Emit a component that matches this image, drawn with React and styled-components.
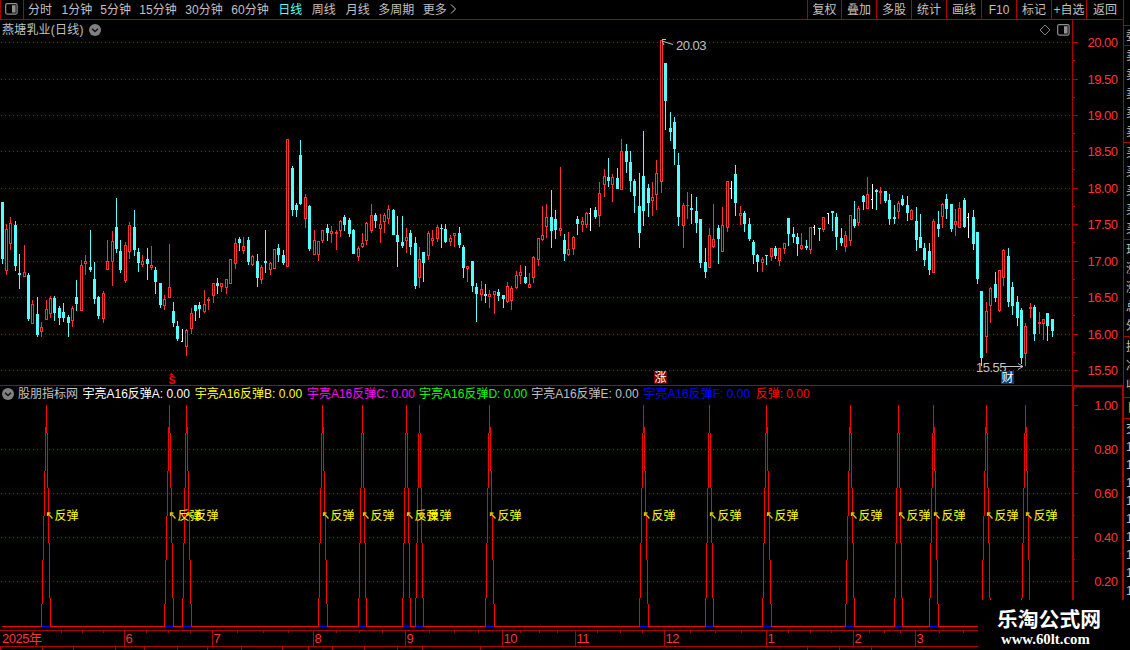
import React, { memo } from "react";
import styled, { createGlobalStyle } from "styled-components";

const LINE = "#b00000";
const RED = "#ff3232";
const CYAN = "#54ffff";

const GlobalStyle = createGlobalStyle`
  * {
    box-sizing: border-box;
  }
  body {
    margin: 0;
    background: #000;
    font-family: "Liberation Sans", "Noto Sans CJK SC", sans-serif;
    font-size: 12px;
    color: #c0c0c0;
  }
  svg {
    display: block;
    flex: none;
  }
`;

const Screen = styled.div`
  position: relative;
  display: flex;
  width: 1130px;
  height: 650px;
  background: #000;
  overflow: hidden;
`;

const Main = styled.div`
  display: flex;
  flex-direction: column;
  width: 1124px;
  flex: none;
`;

const Toolbar = styled.div`
  display: flex;
  height: 20px;
  border-bottom: 1px solid ${LINE};
  border-right: 1px solid ${LINE};
  border-left: 1px solid ${LINE};
  line-height: 20px;
  white-space: nowrap;
`;

const LayoutButton = styled.div`
  width: 23px;
  border-right: 1px solid ${LINE};
  padding: 3px 0 0 4px;
`;

const Periods = styled.div`
  display: flex;
  flex: 1;
  padding-left: 4px;
`;

const Period = styled.span`
  width: ${(p) => p.$w}px;
  color: ${(p) => (p.$active ? CYAN : "#c0c0c0")};
`;

const Tool = styled.div`
  width: ${(p) => p.$w}px;
  border-left: 1px solid ${LINE};
  text-align: center;
`;

const Panel = styled.div`
  display: flex;
  height: ${(p) => p.$h}px;
`;

const Plot = styled.div`
  width: 1072px;
  border-top: ${(p) => (p.$line ? `1px solid ${LINE}` : "none")};
  svg.chart {
    overflow: visible;
  }
`;

const Axis = styled.div`
  width: 52px;
  border: ${(p) => p.$b}px solid ${LINE};
  ${(p) => p.$b === 1 && "border-top: none; border-bottom: none;"}
  svg {
    overflow: visible;
  }
`;

const TitleRow = styled.div`
  display: flex;
  align-items: center;
  height: 20px;
  padding: 0 2px 1px 2px;
  line-height: 18px;
  .name {
    width: 87px;
    letter-spacing: 0.2px;
  }
  .icons {
    display: flex;
    gap: 6px;
    margin-left: auto;
  }
`;

const LegendRow = styled.div`
  display: flex;
  align-items: center;
  height: 16px;
  margin-bottom: 2px;
  padding-left: 2px;
  line-height: 16px;
  white-space: nowrap;
  .source {
    flex: none;
    width: 68.5px;
    padding-left: 4px;
  }
`;

const Legend = styled.span`
  flex: none;
  width: 112.2px;
  color: ${(p) => p.$color};
`;

const AxisText = styled.text`
  font-size: 13px;
  letter-spacing: -0.5px;
  fill: ${(p) => p.$color || RED};
`;

const TimeAxis = styled.div`
  height: 20px;
`;

const Sidebar = styled.div`
  width: 6px;
  overflow: hidden;
  padding-top: 25px;
`;

const SideGroup = styled.div`
  border-top: 1px solid ${LINE};
  height: ${(p) => p.$h}px;
  padding: 1px 0 0 ${(p) => p.$left || 2}px;
  line-height: ${(p) => p.$lh || 19}px;
  white-space: nowrap;
  color: ${(p) => p.$color || "#c0c0c0"};
  overflow: hidden;
`;

const Watermark = styled.div`
  position: absolute;
  left: 978px;
  top: 600px;
  width: 152px;
  height: 50px;
  background: #000;
  color: #fff;
  p {
    margin: 0;
    white-space: nowrap;
  }
  .site {
    font: bold 20.8px/24px "Noto Sans CJK SC", sans-serif;
    padding: 6px 0 0 19px;
  }
  .url {
    font: bold 14.8px/16px "Liberation Serif", serif;
    padding: 1px 0 0 23px;
  }
`;

const periods = [
  ["分时", 33.5],
  ["1分钟", 38.8],
  ["5分钟", 39],
  ["15分钟", 46],
  ["30分钟", 46],
  ["60分钟", 47],
  ["日线", 33.5],
  ["周线", 34],
  ["月线", 32.5],
  ["多周期", 44.5],
  ["更多", 27],
];

const tools = [
  ["复权", 34],
  ["叠加", 35],
  ["多股", 35],
  ["统计", 35],
  ["画线", 35],
  ["F10", 35],
  ["标记", 35],
  ["+自选", 35],
  ["返回", 37],
];

const legends = [
  ["宇亮A16反弹A: 0.00", "#ffffff"],
  ["宇亮A16反弹B: 0.00", "#ffff00"],
  ["宇亮A16反弹C: 0.00", "#ff00ff"],
  ["宇亮A16反弹D: 0.00", "#00ff00"],
  ["宇亮A16反弹E: 0.00", "#c0c0c0"],
  ["宇亮A16反弹F: 0.00", "#0000ff"],
  ["反弹: 0.00", "#ff0000"],
];

const quotes = [
  { h: 20, rows: ["委比"] },
  { h: 97, rows: ["卖五", "卖四", "卖三", "卖二", "卖一"] },
  { h: 97, rows: ["买一", "买二", "买三", "买四", "买五"] },
  { h: 97, rows: ["现价", "涨跌", "涨幅", "总量", "外盘"] },
  { h: 61, rows: ["换手", "净资", "收益"] },
  { h: 21, rows: ["日"], color: "#c8c800", left: 3 },
  {
    h: 182,
    lh: 18,
    rows: ["交", "14:50", "14:51", "14:52", "14:53", "14:54", "14:55", "14:56", "14:57", "14:58"],
  },
];

// kind x high bodyTop bodyBottom low; for "w": kind x high close low
const candles = `
c 2 202 202 259 264|r 6 224 229 271 275|r 10 217 223 244 250|c 15 221 225 266 271|c 19 254 273 275 289
r 24 245 272 277 277|c 28 273 275 319 321|r 32 300 304 324 324|c 37 297 314 335 337|r 41 322 327 332 337
r 46 300 309 320 320|r 50 296 298 314 318|c 54 296 298 313 321|c 59 306 308 318 325|c 63 303 312 318 322
c 68 315 317 323 337|r 72 306 308 321 327|c 76 280 297 304 311|r 81 260 265 311 311|r 85 255 261 264 275
c 90 230 267 270 272|c 94 262 279 299 304|c 98 296 297 316 319|r 103 291 293 319 323|r 107 240 261 270 270
r 112 231 241 262 286|c 116 198 227 249 253|c 120 240 251 270 273|r 125 242 245 281 283|r 129 222 225 252 259
c 134 210 227 250 256|c 138 248 252 263 272|r 142 255 261 265 267|c 147 248 259 264 280|r 151 246 265 268 270
c 155 267 270 282 294|c 160 283 283 305 308|r 164 295 299 306 310|r 169 244 287 298 298|c 173 302 311 323 327
c 177 321 326 339 341|w 182 329 341 342|r 186 329 330 347 356|r 191 308 313 329 334|c 195 305 305 311 321
c 199 302 305 309 318|r 204 290 304 312 313|r 208 297 299 301 310|r 213 283 283 296 303|c 217 278 283 286 294
r 221 283 283 287 292|r 226 279 279 288 294|r 230 259 259 284 284|r 235 238 243 264 269|c 239 237 239 243 251
r 243 237 246 251 254|c 248 237 240 262 265|r 252 255 256 265 266|c 257 254 261 278 287|r 261 265 267 280 284
c 265 230 261 263 273|r 270 262 263 270 275|r 274 249 249 269 269|c 278 244 248 255 262|c 283 250 255 263 265
r 287 139 139 267 267|c 292 166 168 210 216|c 296 203 205 210 217|c 300 140 155 204 205|r 305 194 197 219 228
c 309 205 206 249 251|r 314 230 240 255 255|r 318 241 241 255 261|r 322 230 230 241 243|c 327 224 228 233 241
r 331 226 231 234 243|r 336 230 232 234 250|r 340 220 221 231 237|c 344 215 217 225 231|c 349 218 220 234 237
c 353 229 230 254 254|r 358 246 248 257 261|r 362 233 243 247 248|r 366 222 223 241 245|r 371 204 215 231 233
c 375 213 215 221 228|r 380 214 224 229 243|r 384 213 215 222 233|r 388 205 209 219 224|c 393 209 210 235 235
c 397 216 235 242 267|c 402 216 242 246 248|r 406 228 237 241 253|c 410 230 233 247 255|c 415 237 243 286 289
r 419 247 259 278 288|c 423 252 252 263 282|r 428 231 233 256 260|r 432 230 238 241 246|r 437 225 227 239 242
c 441 224 228 229 248|c 445 224 229 242 243|r 450 235 238 242 246|r 454 233 233 236 247|c 459 227 233 245 248
c 463 245 247 268 278|r 467 266 266 269 282|c 472 261 261 286 292|c 476 283 287 294 322|r 481 281 289 295 301
c 485 284 294 296 303|r 489 290 294 297 308|r 494 291 291 295 314|c 498 289 292 296 301|c 503 295 295 299 308
r 507 282 286 302 303|r 511 286 288 301 310|r 516 271 275 288 289|r 520 265 272 276 284|c 525 266 277 283 284
r 529 273 284 288 288|r 533 256 257 278 283|r 538 238 238 260 266|r 542 206 235 240 241|r 546 204 217 227 238
c 551 190 217 231 248|c 555 210 219 230 239|r 560 167 228 231 236|c 564 234 240 254 261|r 568 232 249 255 256
r 573 236 237 249 255|c 577 216 219 224 235|r 582 217 221 225 232|r 586 212 213 225 228|w 590 208 213 231
c 595 207 210 217 219|r 599 182 193 216 227|r 604 169 176 185 197|c 608 158 177 181 187|r 612 174 177 185 202
c 617 168 178 189 189|r 621 139 151 190 190|c 626 144 151 162 173|c 630 151 162 181 192|c 634 179 181 196 213
c 639 173 206 233 248|c 643 131 176 211 226|c 648 184 188 203 217|r 652 182 197 201 216|r 656 160 173 195 210
r 661 40 40 182 193|c 665 63 63 101 130|c 670 112 128 132 141|c 674 117 122 149 165|c 678 153 165 217 226
r 683 203 205 226 248|r 687 192 205 206 219|c 691 194 208 210 224|c 696 197 211 223 233|c 700 219 219 263 268
c 705 248 262 272 278|r 709 228 235 268 268|r 713 204 239 247 248|c 718 225 228 239 264|r 722 207 225 252 252
r 727 181 181 228 232|w 731 181 188 199|c 735 165 174 203 216|r 740 206 213 216 225|c 744 211 213 224 232
c 749 218 224 239 241|c 753 240 242 255 264|c 757 254 255 262 272|r 762 257 259 263 272|c 766 255 255 256 265
r 771 248 248 257 261|c 775 246 248 256 259|r 779 248 248 261 266|r 784 243 243 249 254|c 788 218 218 234 246
c 793 227 234 237 243|c 797 233 237 244 256|r 801 233 245 249 250|c 806 240 246 248 250|r 810 227 227 250 254
w 814 225 227 235|c 819 228 228 229 241|r 823 217 217 230 232|w 828 213 213 224|c 832 211 211 213 231
c 836 213 217 237 250|c 841 228 238 243 246|r 845 231 235 247 252|r 850 215 215 241 246|c 854 201 219 226 228
r 858 206 208 223 226|c 863 195 196 202 210|r 867 177 194 209 209|w 872 184 199 209|c 876 189 190 192 210
r 880 187 191 193 204|c 885 191 191 201 203|c 889 194 200 219 225|c 894 205 217 219 224|r 898 201 203 212 219
c 902 195 199 205 206|c 907 196 205 213 221|r 911 209 210 220 220|c 916 207 221 240 251|c 920 214 237 248 248
c 924 243 248 260 266|c 929 243 251 270 275|r 933 219 221 273 273|c 938 211 224 229 237|r 942 203 204 217 228
c 946 194 199 209 219|c 951 204 204 229 232|r 955 209 221 225 236|r 959 202 208 228 228|c 964 198 200 227 228
w 968 213 217 238|c 973 210 217 244 250|c 977 232 232 279 284|c 981 291 291 358 366|r 986 302 311 337 353
r 990 287 288 306 323|c 995 272 284 298 302|r 999 270 270 311 312|r 1003 249 250 278 286|c 1008 248 256 302 307
c 1012 282 287 306 315|c 1017 296 302 318 326|c 1021 308 310 358 364|r 1025 323 326 354 366|r 1030 303 307 309 318
c 1034 305 307 334 341|r 1039 312 322 324 334|r 1043 319 319 324 340|c 1047 313 313 326 341|c 1052 319 319 331 337
`
  .trim()
  .split(/[|\n]/)
  .map((row) => {
    const [kind, ...n] = row.split(" ");
    return [kind, ...n.map(Number)];
  });

const centers = candles.map((c) => c[1]);

const priceTicks = [
  ["20.00", 42],
  ["19.50", 79],
  ["19.00", 115],
  ["18.50", 151],
  ["18.00", 188],
  ["17.50", 224],
  ["17.00", 261],
  ["16.50", 297],
  ["16.00", 334],
  ["15.50", 370],
];

const signalTicks = [
  ["1.00", 405],
  ["0.80", 449],
  ["0.60", 493],
  ["0.40", 537],
  ["0.20", 581],
];

const signals = [
  46, 169, 186, 322, 362, 406, 419, 489, 643, 709, 766, 850, 898, 933, 986, 1025,
];

const months = [
  ["6", 124],
  ["7", 212],
  ["8", 313],
  ["9", 405],
  ["10", 502],
  ["11", 575],
  ["12", 664],
  ["1", 766],
  ["2", 853],
  ["3", 915],
];

const monthTicks = [61, 82, 103, 939, 963];
months.slice(1).forEach(([, x], i) => {
  const from = months[i][1];
  [1, 2, 3].forEach((k) => monthTicks.push(Math.round(from + ((x - from) * k) / 4)));
});

const footerTicks = [
  0, 42, 73, 115, 144, 177, 207, 241, 282, 308, 332, 364, 397, 422, 480, 807,
  839, 871,
];

// one side of a spike, stepped a pixel column at a time from 1.00 down to 0
const spikeSide = (x, width, dir) => {
  let d = "";
  for (let k = 0; k <= width; k++) {
    const top = Math.max(405, Math.round(405 + (221 * (k - 0.5)) / width));
    const bottom = Math.min(627, Math.round(405 + (221 * (k + 0.5)) / width));
    d += `M${x + dir * k} ${top}h1V${bottom}h-1Z`;
  }
  return d;
};

const PanelIcon = () => (
  <svg width="13" height="12" viewBox="0 0 13 12">
    <rect x="0.7" y="0.7" width="11.4" height="10.4" rx="1.5" fill="none" stroke="#909090" strokeWidth="1.2" />
    <rect x="7" y="2.2" width="3.6" height="7.4" fill="#909090" />
  </svg>
);

const DropIcon = () => (
  <svg width="12" height="12" viewBox="0 0 12 12">
    <circle cx="6" cy="6" r="6" fill="#808080" />
    <path d="M3 4.8 L6 7.6 L9 4.8" fill="none" stroke="#101010" strokeWidth="1.4" />
  </svg>
);

const Grid = ({ rows }) =>
  rows.map((y) => (
    <line key={y} x1="1" x2="1072" y1={y + 0.5} y2={y + 0.5} stroke={LINE} strokeDasharray="1 3" />
  ));

const Candle = ({ data }) => {
  const [kind, x, high, a, b, low] = data;
  if (kind === "w") {
    return (
      <g fill="#fff">
        <rect x={x} y={high} width="1" height={b - high} />
        <rect x={x - 1} y={a} width="1" height="1" />
      </g>
    );
  }
  const color = kind === "c" ? CYAN : RED;
  return (
    <g fill={color}>
      <rect x={x} y={high} width="1" height={low - high} />
      <rect x={x - 1} y={a} width="3" height={b - a} />
      {kind === "r" && b - a > 2 && (
        <rect x={x} y={a + 1} width="1" height={b - a - 2} fill="#000" />
      )}
    </g>
  );
};

const Tag = ({ x, bg, text }) => (
  <g>
    <rect x={x} y="371" width="13" height="13" fill={bg} />
    <text x={x + 0.5} y="382" fontSize="12" fill="#fff">
      {text}
    </text>
  </g>
);

const PriceChart = () => (
  <svg className="chart" width="1072" height="345" viewBox="0 40 1072 345">
    <g shapeRendering="crispEdges">
      <Grid rows={priceTicks.map((t) => t[1])} />
      {candles.map((c) => (
        <Candle key={c[1]} data={c} />
      ))}
    </g>
    <g fill="none" stroke="#c0c0c0">
      <path d="M662 41 L673 44.5 M666 39.5 H662 M662 41 L664 45" />
      <path d="M1001 366.5 H1023 M1018 363.5 L1023 366.5 L1018 369.5" />
    </g>
    <AxisText x="676" y="50" $color="#c0c0c0">
      20.03
    </AxisText>
    <AxisText x="976" y="372" $color="#c0c0c0">
      15.55
    </AxisText>
    <path d="M169 375.5 L171.5 373 L174 375.5 Z" fill="#f00" />
    <text x="168.5" y="384" fontSize="10.5" fontWeight="bold" fill="#f00">
      S
    </text>
    <Tag x={654} bg="#780000" text="涨" />
    <Tag x={1001} bg="#003c78" text="财" />
  </svg>
);

const SignalChart = () => (
  <svg className="chart" width="1072" height="226" viewBox="0 404 1072 226">
    <g shapeRendering="crispEdges">
      <Grid rows={signalTicks.slice(1).map((t) => t[1])} />
      <rect x="2" y="626" width="1051" height="1" fill="#f00" />
      {signals.map((x) => {
        const i = centers.indexOf(x);
        const l = centers[i - 1];
        const r = centers[i + 1];
        return (
          <g key={x}>
            <rect x={l} y="626" width={r - l} height="1" fill="#00f" />
            <path d={spikeSide(x, x - l, -1) + spikeSide(x, r - x, 1)} fill="#f00" />
          </g>
        );
      })}
    </g>
    {signals.map((x) => (
      <g key={x}>
        <path
          d={`M${x + 1.5} 516 V513 H${x + 4.5} M${x + 1.5} 513 L${x + 6.5} 518.5`}
          fill="none"
          stroke="#d8c800"
          strokeWidth="1.3"
        />
        <text x={x + 8.5} y="520" fontSize="12" fill="#ff0">
          反弹
        </text>
      </g>
    ))}
  </svg>
);

const Scale = ({ ticks, left, top, height, step }) => (
  <svg width="48" height={height} viewBox={`${left} ${top} 48 ${height}`}>
    {ticks.map(([label, y]) => (
      <g key={label}>
        <rect x={left} y={y} width={1078 - left} height="1" fill={LINE} />
        {y + step < 625 && (
          <rect x={left} y={y + step} width={1075 - left} height="1" fill={LINE} />
        )}
        <AxisText x="1117.5" y={y + 5} textAnchor="end">
          {label}
        </AxisText>
      </g>
    ))}
  </svg>
);

const App = memo(() => {
  return (
    <Screen>
      <GlobalStyle />
      <Main>
        <Toolbar>
          <LayoutButton>
            <PanelIcon />
          </LayoutButton>
          <Periods>
            {periods.map(([label, w]) => (
              <Period key={label} $w={w} $active={label === "日线"}>
                {label}
              </Period>
            ))}
            <svg width="7" height="18" viewBox="0 0 7 18">
              <path d="M1 4.5 L5.5 9 L1 13.5" fill="none" stroke="#c0c0c0" />
            </svg>
          </Periods>
          {tools.map(([label, w]) => (
            <Tool key={label} $w={w}>
              {label}
            </Tool>
          ))}
        </Toolbar>
        <Panel $h={365}>
          <Plot>
            <TitleRow>
              <span className="name">燕塘乳业(日线)</span>
              <DropIcon />
              <div className="icons">
                <svg width="12" height="12" viewBox="0 0 12 12">
                  <path d="M6 1 L11 6 L6 11 L1 6 Z" fill="none" stroke="#808080" />
                </svg>
                <PanelIcon />
              </div>
            </TitleRow>
            <PriceChart />
          </Plot>
          <Axis $b={1}>
            <Scale ticks={priceTicks} left={1073} top={20} height={365} step={18} />
          </Axis>
        </Panel>
        <Panel $h={245}>
          <Plot $line>
            <LegendRow>
              <DropIcon />
              <span className="source">股朋指标网</span>
              {legends.map(([label, color]) => (
                <Legend key={label} $color={color}>
                  {label}
                </Legend>
              ))}
            </LegendRow>
            <SignalChart />
          </Plot>
          <Axis $b={2}>
            <Scale ticks={signalTicks} left={1074} top={387} height={241} step={22} />
          </Axis>
        </Panel>
        <TimeAxis>
          <svg width="1124" height="20" viewBox="0 630 1124 20">
            <g fill={LINE}>
              <rect x="0" y="630" width="1124" height="1" />
              <rect x="0" y="646" width="1124" height="1" />
              {monthTicks.map((x) => (
                <rect key={x} x={x} y="631" width="1" height="2" />
              ))}
              {footerTicks.map((x) => (
                <rect key={x} x={x} y="647" width="1" height="3" />
              ))}
              {months.map(([label, x]) => (
                <rect key={label} x={x} y="631" width="1" height="15" />
              ))}
            </g>
            <AxisText x="2" y="643">
              2025年
            </AxisText>
            {months.map(([label, x]) => (
              <AxisText key={label} x={x + 1.5} y="643">
                {label}
              </AxisText>
            ))}
          </svg>
        </TimeAxis>
      </Main>
      <Sidebar>
        {quotes.map(({ h, rows, color, left, lh }) => (
          <SideGroup key={rows[0]} $h={h} $color={color} $left={left} $lh={lh}>
            {rows.map((row) => (
              <div key={row}>{row}</div>
            ))}
          </SideGroup>
        ))}
      </Sidebar>
      <Watermark>
        <p className="site">乐淘公式网</p>
        <p className="url">www.60lt.com</p>
      </Watermark>
    </Screen>
  );
});

export default App;
